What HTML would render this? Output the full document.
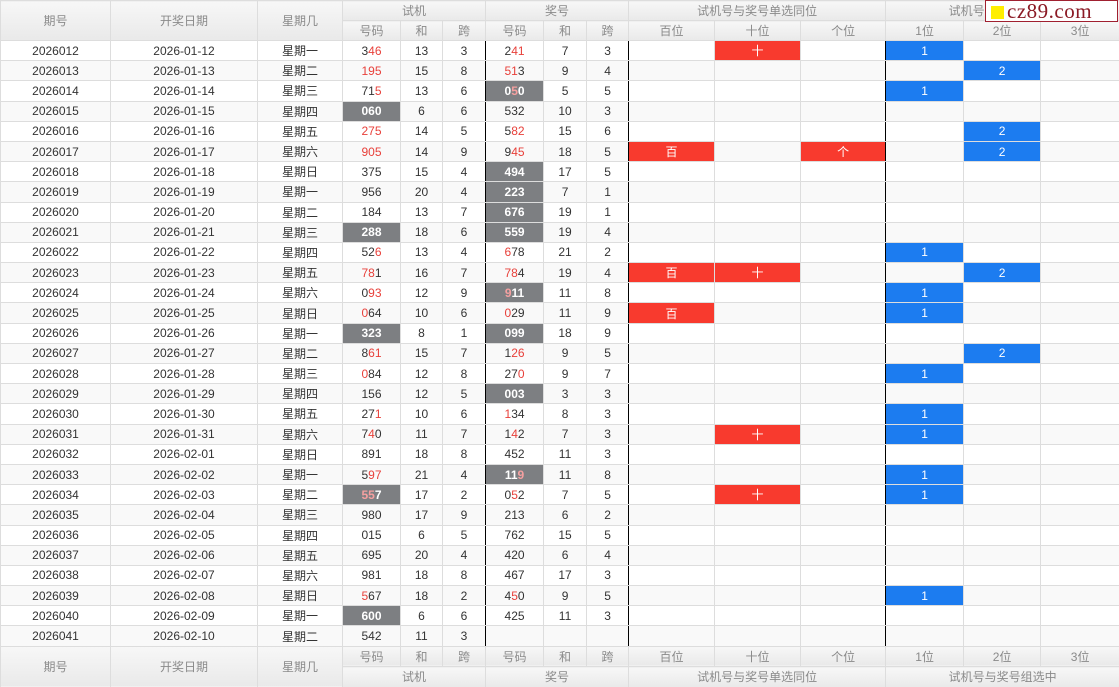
<!DOCTYPE html>
<html><head><meta charset="utf-8"><style>
html,body{margin:0;padding:0;background:#fff;width:1119px;height:687px;overflow:hidden}
body{font-family:"Liberation Sans","Noto Sans CJK SC",sans-serif;font-size:12px;color:#333;position:relative}
table{border-collapse:collapse;table-layout:fixed;width:1119px}
td,th{border:1px solid #ddd;text-align:center;padding:0;white-space:nowrap;overflow:hidden}
th{background:linear-gradient(#f7f7f7,#e9e9e9);color:#8a8a8a;font-weight:normal;font-size:12px}
thead tr{height:20px}
tbody tr{height:20.2px}
tbody tr:nth-child(even) td{background:#f9f9f9}
tfoot tr{height:20.5px}
.r{color:#e8403a}
tbody tr td.g{background:#7d7f82;color:#fff;font-weight:bold}
.g .r{color:#f5a0a0}
tbody tr td.R{background:#f83a2e;color:#fff}
tbody tr td.B{background:#1c7cf0;color:#fff}
tbody td.k{border-right:1.5px solid #000}
#logo{position:absolute;left:985px;top:0;width:131px;height:20px;border:1px solid #a02030;background:#fff;font-family:"Liberation Serif",serif;font-size:21px;color:#8b1a25;line-height:20px;letter-spacing:0.5px;white-space:nowrap}
#logo i{display:inline-block;width:13px;height:13px;background:#ffee00;margin:0 3px 0 5px;vertical-align:-1px}
</style></head><body>
<table>
<colgroup><col style="width:110px"><col style="width:147px"><col style="width:85px"><col style="width:58px"><col style="width:42px"><col style="width:43px"><col style="width:58px"><col style="width:43px"><col style="width:42px"><col style="width:86px"><col style="width:86px"><col style="width:85px"><col style="width:78px"><col style="width:77px"><col style="width:79px"></colgroup>
<thead>
<tr><th rowspan="2">期号</th><th rowspan="2">开奖日期</th><th rowspan="2">星期几</th><th colspan="3">试机</th><th colspan="3">奖号</th><th colspan="3">试机号与奖号单选同位</th><th colspan="3">试机号与奖号组选中</th></tr>
<tr><th>号码</th><th>和</th><th>跨</th><th>号码</th><th>和</th><th>跨</th><th>百位</th><th>十位</th><th>个位</th><th>1位</th><th>2位</th><th>3位</th></tr>
</thead>
<tbody>
<tr><td>2026012</td><td>2026-01-12</td><td>星期一</td><td>3<span class="r">46</span></td><td>13</td><td class="k">3</td><td>2<span class="r">41</span></td><td>7</td><td class="k">3</td><td></td><td class="R">十</td><td class="k"></td><td class="B">1</td><td></td><td></td></tr>
<tr><td>2026013</td><td>2026-01-13</td><td>星期二</td><td><span class="r">195</span></td><td>15</td><td class="k">8</td><td><span class="r">51</span>3</td><td>9</td><td class="k">4</td><td></td><td></td><td class="k"></td><td></td><td class="B">2</td><td></td></tr>
<tr><td>2026014</td><td>2026-01-14</td><td>星期三</td><td>71<span class="r">5</span></td><td>13</td><td class="k">6</td><td class="g">0<span class="r">5</span>0</td><td>5</td><td class="k">5</td><td></td><td></td><td class="k"></td><td class="B">1</td><td></td><td></td></tr>
<tr><td>2026015</td><td>2026-01-15</td><td>星期四</td><td class="g">060</td><td>6</td><td class="k">6</td><td>532</td><td>10</td><td class="k">3</td><td></td><td></td><td class="k"></td><td></td><td></td><td></td></tr>
<tr><td>2026016</td><td>2026-01-16</td><td>星期五</td><td><span class="r">275</span></td><td>14</td><td class="k">5</td><td>5<span class="r">82</span></td><td>15</td><td class="k">6</td><td></td><td></td><td class="k"></td><td></td><td class="B">2</td><td></td></tr>
<tr><td>2026017</td><td>2026-01-17</td><td>星期六</td><td><span class="r">905</span></td><td>14</td><td class="k">9</td><td>9<span class="r">45</span></td><td>18</td><td class="k">5</td><td class="R">百</td><td></td><td class="R k">个</td><td></td><td class="B">2</td><td></td></tr>
<tr><td>2026018</td><td>2026-01-18</td><td>星期日</td><td>375</td><td>15</td><td class="k">4</td><td class="g">494</td><td>17</td><td class="k">5</td><td></td><td></td><td class="k"></td><td></td><td></td><td></td></tr>
<tr><td>2026019</td><td>2026-01-19</td><td>星期一</td><td>956</td><td>20</td><td class="k">4</td><td class="g">223</td><td>7</td><td class="k">1</td><td></td><td></td><td class="k"></td><td></td><td></td><td></td></tr>
<tr><td>2026020</td><td>2026-01-20</td><td>星期二</td><td>184</td><td>13</td><td class="k">7</td><td class="g">676</td><td>19</td><td class="k">1</td><td></td><td></td><td class="k"></td><td></td><td></td><td></td></tr>
<tr><td>2026021</td><td>2026-01-21</td><td>星期三</td><td class="g">288</td><td>18</td><td class="k">6</td><td class="g">559</td><td>19</td><td class="k">4</td><td></td><td></td><td class="k"></td><td></td><td></td><td></td></tr>
<tr><td>2026022</td><td>2026-01-22</td><td>星期四</td><td>52<span class="r">6</span></td><td>13</td><td class="k">4</td><td><span class="r">6</span>78</td><td>21</td><td class="k">2</td><td></td><td></td><td class="k"></td><td class="B">1</td><td></td><td></td></tr>
<tr><td>2026023</td><td>2026-01-23</td><td>星期五</td><td><span class="r">78</span>1</td><td>16</td><td class="k">7</td><td><span class="r">78</span>4</td><td>19</td><td class="k">4</td><td class="R">百</td><td class="R">十</td><td class="k"></td><td></td><td class="B">2</td><td></td></tr>
<tr><td>2026024</td><td>2026-01-24</td><td>星期六</td><td>0<span class="r">93</span></td><td>12</td><td class="k">9</td><td class="g"><span class="r">9</span>11</td><td>11</td><td class="k">8</td><td></td><td></td><td class="k"></td><td class="B">1</td><td></td><td></td></tr>
<tr><td>2026025</td><td>2026-01-25</td><td>星期日</td><td><span class="r">0</span>64</td><td>10</td><td class="k">6</td><td><span class="r">0</span>29</td><td>11</td><td class="k">9</td><td class="R">百</td><td></td><td class="k"></td><td class="B">1</td><td></td><td></td></tr>
<tr><td>2026026</td><td>2026-01-26</td><td>星期一</td><td class="g">323</td><td>8</td><td class="k">1</td><td class="g">099</td><td>18</td><td class="k">9</td><td></td><td></td><td class="k"></td><td></td><td></td><td></td></tr>
<tr><td>2026027</td><td>2026-01-27</td><td>星期二</td><td>8<span class="r">61</span></td><td>15</td><td class="k">7</td><td>1<span class="r">26</span></td><td>9</td><td class="k">5</td><td></td><td></td><td class="k"></td><td></td><td class="B">2</td><td></td></tr>
<tr><td>2026028</td><td>2026-01-28</td><td>星期三</td><td><span class="r">0</span>84</td><td>12</td><td class="k">8</td><td>27<span class="r">0</span></td><td>9</td><td class="k">7</td><td></td><td></td><td class="k"></td><td class="B">1</td><td></td><td></td></tr>
<tr><td>2026029</td><td>2026-01-29</td><td>星期四</td><td>156</td><td>12</td><td class="k">5</td><td class="g">003</td><td>3</td><td class="k">3</td><td></td><td></td><td class="k"></td><td></td><td></td><td></td></tr>
<tr><td>2026030</td><td>2026-01-30</td><td>星期五</td><td>27<span class="r">1</span></td><td>10</td><td class="k">6</td><td><span class="r">1</span>34</td><td>8</td><td class="k">3</td><td></td><td></td><td class="k"></td><td class="B">1</td><td></td><td></td></tr>
<tr><td>2026031</td><td>2026-01-31</td><td>星期六</td><td>7<span class="r">4</span>0</td><td>11</td><td class="k">7</td><td>1<span class="r">4</span>2</td><td>7</td><td class="k">3</td><td></td><td class="R">十</td><td class="k"></td><td class="B">1</td><td></td><td></td></tr>
<tr><td>2026032</td><td>2026-02-01</td><td>星期日</td><td>891</td><td>18</td><td class="k">8</td><td>452</td><td>11</td><td class="k">3</td><td></td><td></td><td class="k"></td><td></td><td></td><td></td></tr>
<tr><td>2026033</td><td>2026-02-02</td><td>星期一</td><td>5<span class="r">97</span></td><td>21</td><td class="k">4</td><td class="g">11<span class="r">9</span></td><td>11</td><td class="k">8</td><td></td><td></td><td class="k"></td><td class="B">1</td><td></td><td></td></tr>
<tr><td>2026034</td><td>2026-02-03</td><td>星期二</td><td class="g"><span class="r">55</span>7</td><td>17</td><td class="k">2</td><td>0<span class="r">5</span>2</td><td>7</td><td class="k">5</td><td></td><td class="R">十</td><td class="k"></td><td class="B">1</td><td></td><td></td></tr>
<tr><td>2026035</td><td>2026-02-04</td><td>星期三</td><td>980</td><td>17</td><td class="k">9</td><td>213</td><td>6</td><td class="k">2</td><td></td><td></td><td class="k"></td><td></td><td></td><td></td></tr>
<tr><td>2026036</td><td>2026-02-05</td><td>星期四</td><td>015</td><td>6</td><td class="k">5</td><td>762</td><td>15</td><td class="k">5</td><td></td><td></td><td class="k"></td><td></td><td></td><td></td></tr>
<tr><td>2026037</td><td>2026-02-06</td><td>星期五</td><td>695</td><td>20</td><td class="k">4</td><td>420</td><td>6</td><td class="k">4</td><td></td><td></td><td class="k"></td><td></td><td></td><td></td></tr>
<tr><td>2026038</td><td>2026-02-07</td><td>星期六</td><td>981</td><td>18</td><td class="k">8</td><td>467</td><td>17</td><td class="k">3</td><td></td><td></td><td class="k"></td><td></td><td></td><td></td></tr>
<tr><td>2026039</td><td>2026-02-08</td><td>星期日</td><td><span class="r">5</span>67</td><td>18</td><td class="k">2</td><td>4<span class="r">5</span>0</td><td>9</td><td class="k">5</td><td></td><td></td><td class="k"></td><td class="B">1</td><td></td><td></td></tr>
<tr><td>2026040</td><td>2026-02-09</td><td>星期一</td><td class="g">600</td><td>6</td><td class="k">6</td><td>425</td><td>11</td><td class="k">3</td><td></td><td></td><td class="k"></td><td></td><td></td><td></td></tr>
<tr><td>2026041</td><td>2026-02-10</td><td>星期二</td><td>542</td><td>11</td><td class="k">3</td><td></td><td></td><td class="k"></td><td></td><td></td><td class="k"></td><td></td><td></td><td></td></tr>
</tbody>
<tfoot>
<tr><th rowspan="2">期号</th><th rowspan="2">开奖日期</th><th rowspan="2">星期几</th><th>号码</th><th>和</th><th>跨</th><th>号码</th><th>和</th><th>跨</th><th>百位</th><th>十位</th><th>个位</th><th>1位</th><th>2位</th><th>3位</th></tr>
<tr><th colspan="3">试机</th><th colspan="3">奖号</th><th colspan="3">试机号与奖号单选同位</th><th colspan="3">试机号与奖号组选中</th></tr>
</tfoot>
</table>
<div id="logo"><i></i>cz89.com</div>
</body></html>
